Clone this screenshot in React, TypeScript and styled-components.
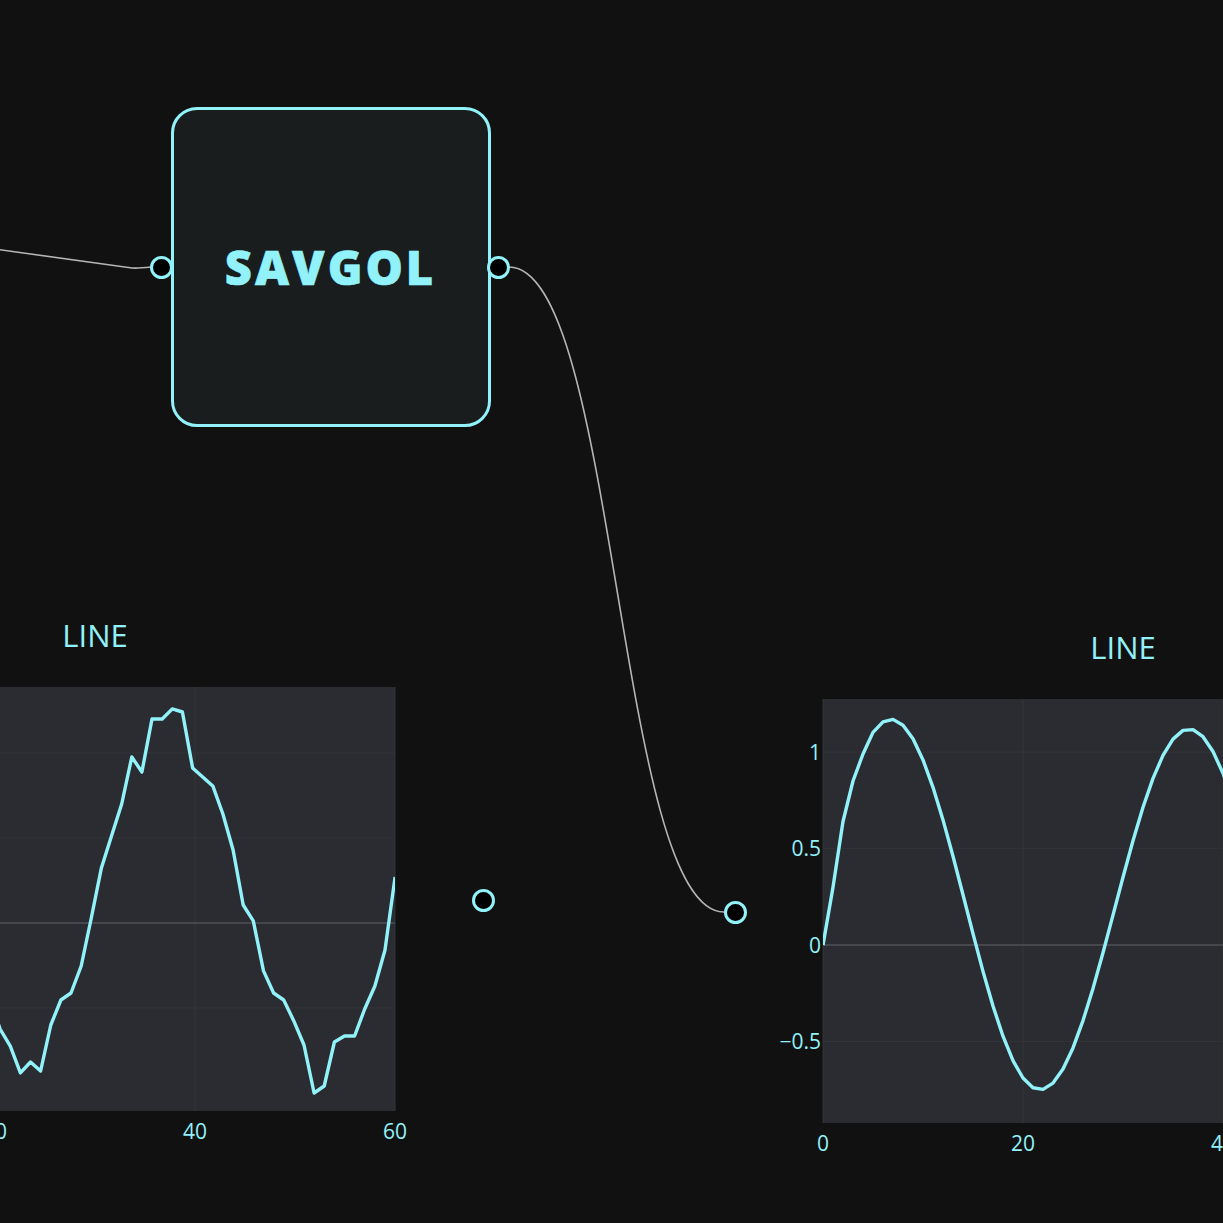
import React, { FC } from "react";
import styled, { createGlobalStyle } from "styled-components";

const CYAN = "#92f2fa";

const GlobalStyle = createGlobalStyle`
  html, body {
    margin: 0;
    padding: 0;
    background: #111111;
  }
  body {
    font-family: "Open Sans", "Noto Sans", sans-serif;
  }
`;

// plot area is 600 x 424, framed by margins inside each chart node
const PLOT_W = 600;
const PLOT_H = 424;
const M_LEFT = 80;
const M_TOP = 87;
const NODE_W = 760;
const NODE_H = 561;

interface ISeries {
  x0: number;
  step: number;
  values: number[];
}

interface IChartProps {
  x: number;
  y: number;
  yMin: number;
  yMax: number;
  yTicks?: { v: number; label: string }[];
  yGrid: number[];
  xTicks: number[];
  series: ISeries;
}

const leftSeries: ISeries = {
  x0: 19.5,
  step: 1.0128,
  values: [
    -0.45, -0.624, -0.724, -0.882, -0.818, -0.871, -0.6, -0.453, -0.412,
    -0.253, 0.029, 0.324, 0.512, 0.7, 0.976, 0.888, 1.2, 1.2, 1.259, 1.241,
    0.912, 0.859, 0.806, 0.641, 0.429, 0.106, 0.012, -0.282, -0.412, -0.453,
    -0.576, -0.718, -1.0, -0.959, -0.7, -0.665, -0.665, -0.506, -0.371,
    -0.159, 0.271,
  ],
};

const smoothed = (): number[] => {
  const out: number[] = [0, 0.3, 0.64, 0.85, 0.99];
  for (let i = 5; i <= 60; i++) {
    const c = Math.cos((2 * Math.PI * (i - 6.8)) / 29.8);
    out.push(i <= 22 ? 0.21 + 0.96 * c : 0.185 + 0.935 * c);
  }
  return out;
};

const rightSeries: ISeries = { x0: 0, step: 1, values: smoothed() };

const Chart: FC<IChartProps> = ({
  x,
  y,
  yMin,
  yMax,
  yTicks,
  yGrid,
  xTicks,
  series,
}) => {
  const px = (v: number) => M_LEFT + (v / 60) * PLOT_W;
  const py = (v: number) => M_TOP + ((yMax - v) / (yMax - yMin)) * PLOT_H;
  const d = series.values
    .map((v, i) => {
      const cx = px(series.x0 + i * series.step);
      return `${i === 0 ? "M" : "L"}${cx.toFixed(1)} ${py(v).toFixed(1)}`;
    })
    .join(" ");

  return (
    <ChartNode $x={x} $y={y}>
      <svg width={NODE_W} height={NODE_H} viewBox={`0 0 ${NODE_W} ${NODE_H}`}>
        <defs>
          <clipPath id={`plot-${x}`}>
            <rect x={M_LEFT} y={M_TOP} width={PLOT_W} height={PLOT_H} />
          </clipPath>
        </defs>
        <text
          x={M_LEFT + PLOT_W / 2}
          y={M_TOP - 40}
          fill={CYAN}
          fontSize={31}
          textAnchor="middle"
          fontFamily="'Open Sans', sans-serif"
        >
          LINE
        </text>
        <rect
          x={M_LEFT}
          y={M_TOP}
          width={PLOT_W}
          height={PLOT_H}
          fill="#2b2c31"
        />
        {xTicks.map((t) => (
          <line
            key={`gx${t}`}
            x1={px(t)}
            x2={px(t)}
            y1={M_TOP}
            y2={M_TOP + PLOT_H}
            stroke="#333439"
            strokeWidth={1}
          />
        ))}
        {yGrid.map((g) => (
          <line
            key={`gy${g}`}
            x1={M_LEFT}
            x2={M_LEFT + PLOT_W}
            y1={py(g)}
            y2={py(g)}
            stroke="#333439"
            strokeWidth={1}
          />
        ))}
        <line
          x1={M_LEFT}
          x2={M_LEFT + PLOT_W}
          y1={py(0)}
          y2={py(0)}
          stroke="#505156"
          strokeWidth={1.5}
        />
        <path
          d={d}
          fill="none"
          stroke={CYAN}
          strokeWidth={3.4}
          strokeLinejoin="round"
          clipPath={`url(#plot-${x})`}
        />
        {xTicks.map((t) => (
          <text
            key={`tx${t}`}
            x={px(t)}
            y={M_TOP + PLOT_H + 28}
            fill={CYAN}
            fontSize={21}
            textAnchor="middle"
            fontFamily="'Open Sans', sans-serif"
          >
            {t}
          </text>
        ))}
        {yTicks?.map((t) => (
          <text
            key={`ty${t.label}`}
            x={M_LEFT - 2}
            y={py(t.v) + 7.5}
            fill={CYAN}
            fontSize={21}
            textAnchor="end"
            fontFamily="'Open Sans', sans-serif"
          >
            {t.label}
          </text>
        ))}
      </svg>
      <Handle $side="left" />
      <Handle $side="right" />
    </ChartNode>
  );
};

const App: FC = () => {
  return (
    <>
      <GlobalStyle />
      <Canvas>
        <Edges width={1223} height={1223}>
          <path
            d="M -20 247 L 132 268 Q 137 268.5 151 267"
            fill="none"
            stroke="#b4b4b4"
            strokeWidth={1.6}
          />
          <path
            d="M 509 267 C 617 267 617 912 724 912"
            fill="none"
            stroke="#b4b4b4"
            strokeWidth={1.6}
          />
        </Edges>
        <FilterNode>
          <Handle $side="left" />
          <Label>SAVGOL</Label>
          <Handle $side="right" />
        </FilterNode>
        <Chart
          x={-285}
          y={600}
          yMin={-1.106}
          yMax={1.388}
          yGrid={[-0.5, 0.5, 1]}
          xTicks={[0, 20, 40, 60]}
          series={leftSeries}
        />
        <Chart
          x={743}
          y={612}
          yMin={-0.922}
          yMax={1.275}
          yGrid={[-0.5, 0.5, 1]}
          yTicks={[
            { v: 1, label: "1" },
            { v: 0.5, label: "0.5" },
            { v: 0, label: "0" },
            { v: -0.5, label: "\u22120.5" },
          ]}
          xTicks={[0, 20, 40, 60]}
          series={rightSeries}
        />
      </Canvas>
    </>
  );
};

export default App;

const Canvas = styled.div`
  position: relative;
  width: 1223px;
  height: 1223px;
  overflow: hidden;
  background: #111111;
`;

const Edges = styled.svg`
  position: absolute;
  left: 0;
  top: 0;
  pointer-events: none;
`;

const FilterNode = styled.div`
  position: absolute;
  left: 171px;
  top: 107px;
  width: 320px;
  height: 320px;
  box-sizing: border-box;
  display: flex;
  align-items: center;
  justify-content: center;
  border: 3px solid ${CYAN};
  border-radius: 26px;
  background: #191d1e;
`;

const Label = styled.div`
  color: ${CYAN};
  font-family: "Open Sans", sans-serif;
  font-weight: 800;
  font-size: 47px;
  letter-spacing: 3px;
  line-height: 1;
  margin-left: -1px;
  -webkit-text-stroke: 0.6px ${CYAN};
`;

const ChartNode = styled.div<{ $x: number; $y: number }>`
  position: absolute;
  left: ${(p) => p.$x}px;
  top: ${(p) => p.$y}px;
  width: ${NODE_W}px;
  height: ${NODE_H}px;

  svg {
    display: block;
  }
`;

const Handle = styled.span<{ $side: "left" | "right" }>`
  position: absolute;
  top: 145.5px;
  ${(p) => (p.$side === "left" ? "left: -24.5px;" : "right: -21.5px;")}
  width: 23px;
  height: 23px;
  box-sizing: border-box;
  border: 3px solid ${CYAN};
  border-radius: 50%;
  background: #000;

  ${ChartNode} & {
    top: 288.5px;
    ${(p) => (p.$side === "left" ? "left: -19.5px;" : "right: -19.5px;")}
  }
`;
